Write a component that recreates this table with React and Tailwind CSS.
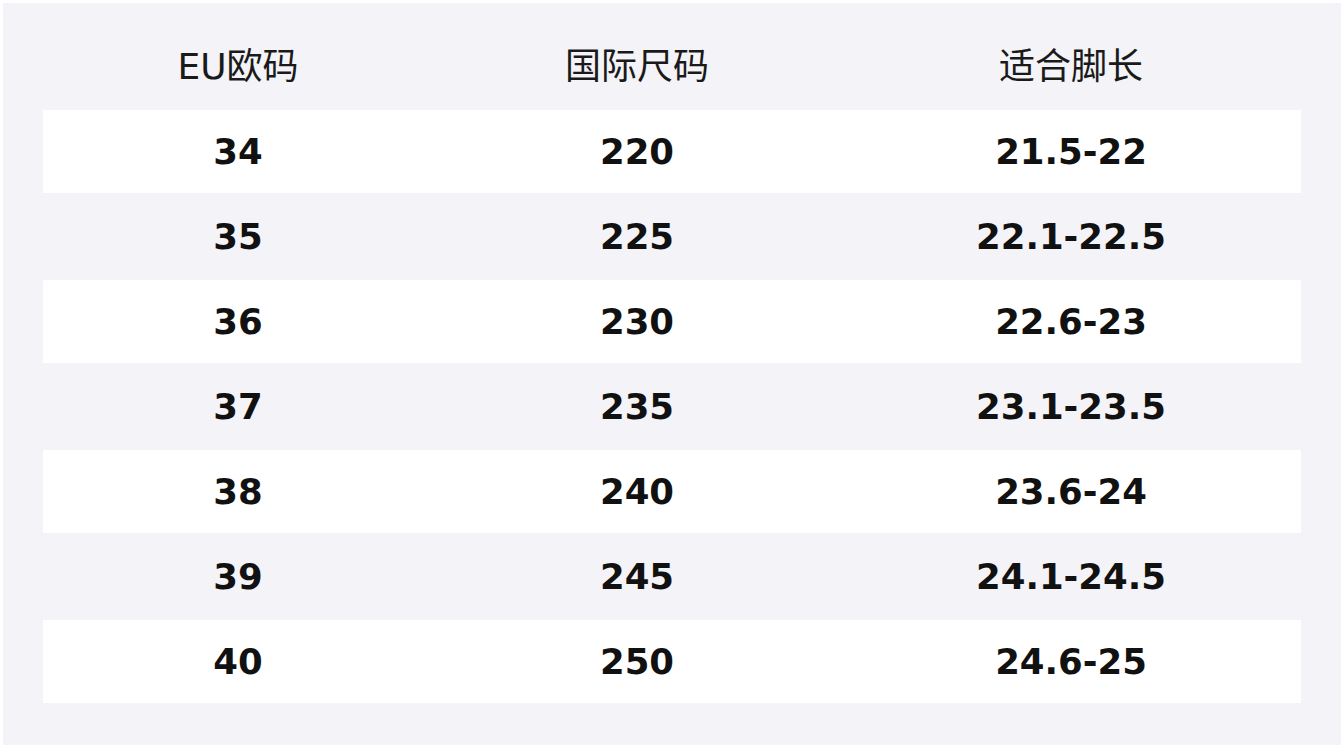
import React from 'react';

const rows = [
  ['34', '220', '21.5-22'],
  ['35', '225', '22.1-22.5'],
  ['36', '230', '22.6-23'],
  ['37', '235', '23.1-23.5'],
  ['38', '240', '23.6-24'],
  ['39', '245', '24.1-24.5'],
  ['40', '250', '24.6-25'],
];

const cols = 'grid grid-cols-[390px_408px_460px]';

export default function App() {
  return (
    <div className="min-h-screen bg-white p-[3px] font-['DejaVu_Sans','Noto_Sans_CJK_SC',sans-serif]">
      <div className="h-[742px] bg-[#f3f3f8] px-10 pt-6">
        <div className={`${cols} h-20 items-center text-center text-[36px] text-[#1a1a1a]`}>
          <div>EU欧码</div>
          <div>国际尺码</div>
          <div>适合脚长</div>
        </div>
        <div className="mt-[3px] flex flex-col gap-[2px]">
          {rows.map((r, i) => (
            <div
              key={r[0]}
              className={`${cols} h-[83px] items-center pt-px text-center text-[35.5px] font-bold text-[#111] ${
                i % 2 === 0 ? 'bg-white' : ''
              }`}
            >
              {r.map((c, j) => (
                <div key={j}>{c}</div>
              ))}
            </div>
          ))}
        </div>
      </div>
    </div>
  );
}
